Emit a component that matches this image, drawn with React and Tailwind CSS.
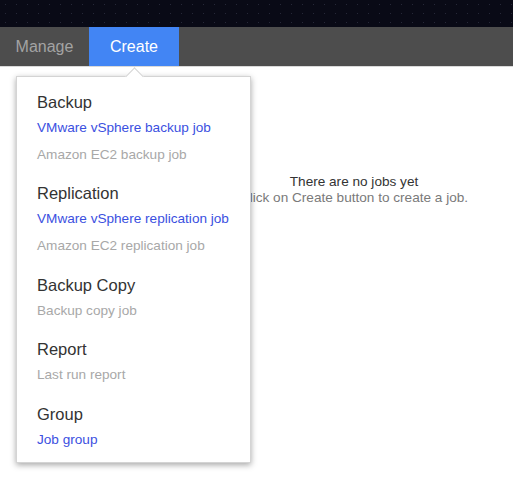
const sections = [
  {
    title: 'Backup',
    items: [
      { label: 'VMware vSphere backup job', active: true },
      { label: 'Amazon EC2 backup job', active: false },
    ],
  },
  {
    title: 'Replication',
    items: [
      { label: 'VMware vSphere replication job', active: true },
      { label: 'Amazon EC2 replication job', active: false },
    ],
  },
  { title: 'Backup Copy', items: [{ label: 'Backup copy job', active: false }] },
  { title: 'Report', items: [{ label: 'Last run report', active: false }] },
  { title: 'Group', items: [{ label: 'Job group', active: true }] },
]

export default function App() {
  return (
    <div className="relative w-full h-[498px] overflow-hidden bg-white font-['Liberation_Sans',Arial,sans-serif]">
      {/* starry header strip */}
      <div className="h-[27px] bg-[#090a16] bg-[radial-gradient(#262838_0.5px,transparent_0.8px)] bg-[length:11px_9px]" />

      {/* nav */}
      <nav className="flex h-[39px] bg-[#4d4d4d] border-b border-[#d9d9d9] box-content">
        <div className="w-[89px] flex items-center justify-center text-[16px] text-[#a3a3a3]">Manage</div>
        <div className="w-[90px] flex items-center justify-center text-[16px] text-white bg-[#4285f4]">Create</div>
      </nav>

      {/* empty state */}
      <div className="w-[708px] pt-[107px] text-center text-[13.6px] leading-[16px]">
        <div className="text-[#333333]">There are no jobs yet</div>
        <div className="text-[#7a7a7a]">Click on Create button to create a job.</div>
      </div>

      {/* dropdown */}
      <div className="absolute left-[16px] top-[76px] w-[235px] bg-white border border-[#d4d4d4] shadow-[0_2px_6px_rgba(0,0,0,0.35)] pl-[20px] pt-[13px] pb-[9px]">
        <div className="absolute -top-[7px] left-[111px] w-[13px] h-[13px] bg-white border-l border-t border-[#d4d4d4] rotate-45" />
        <div className="relative flex flex-col gap-[13.4px]">
          {sections.map((s) => (
            <div key={s.title}>
              <div className="text-[16.5px] leading-[24px] text-[#333333]">{s.title}</div>
              {s.items.map((it) => (
                <div
                  key={it.label}
                  className={
                    'text-[13.6px] leading-[27px] ' +
                    (it.active ? 'text-[#3b50df]' : 'text-[#a8a8a8]')
                  }
                >
                  {it.label}
                </div>
              ))}
            </div>
          ))}
        </div>
      </div>
    </div>
  )
}
